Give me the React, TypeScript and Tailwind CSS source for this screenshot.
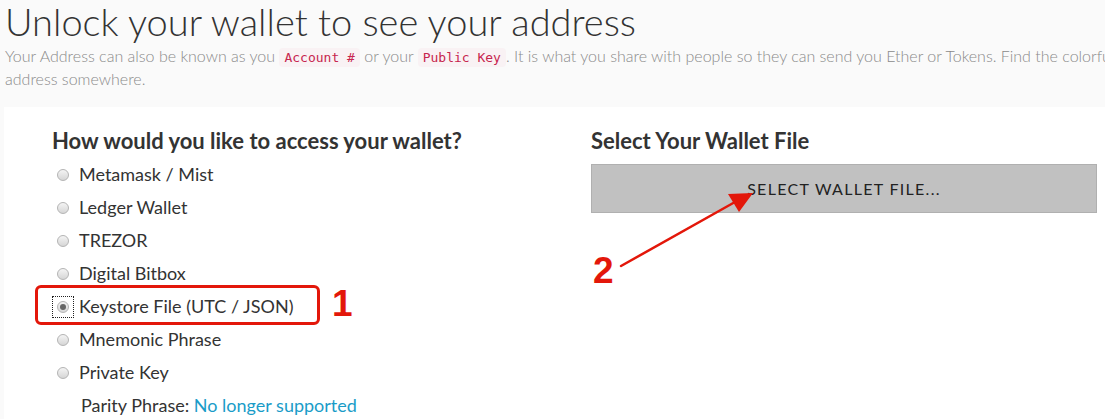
const options = [
  'Metamask / Mist',
  'Ledger Wallet',
  'TREZOR',
  'Digital Bitbox',
  'Keystore File (UTC / JSON)',
  'Mnemonic Phrase',
  'Private Key',
]

function Radio({ checked }: { checked: boolean }) {
  return (
    <span className="w-[12px] h-[12px] rounded-full border border-[#b4b4b4] bg-gradient-to-b from-[#f4f4f4] to-[#d6d6d6] flex items-center justify-center flex-shrink-0">
      {checked && <span className="w-[6px] h-[6px] rounded-full bg-[#666]" />}
    </span>
  )
}

export default function App() {
  const selected = 'Keystore File (UTC / JSON)'

  return (
    <div className="w-[1105px] h-[419px] overflow-hidden bg-[#fafafa] text-[#333] font-['Lato','Noto_Sans',sans-serif] relative">
      {/* Header */}
      <div className="pl-[5px]">
        <h1 className="text-[38px] leading-[42px] font-light text-[#333] whitespace-nowrap">
          Unlock your wallet to see your address
        </h1>
        <p className="mt-[3px] text-[16px] leading-[21px] font-light text-[#8a8a8a] whitespace-nowrap">
          Your Address can also be known as you{' '}
          <code className="px-[5px] py-[2px] rounded bg-[#f9f2f4] text-[#c7254e] text-[13px] font-['DejaVu_Sans_Mono',monospace]">
            Account #
          </code>{' '}
          or your{' '}
          <code className="px-[5px] py-[2px] rounded bg-[#f9f2f4] text-[#c7254e] text-[13px] font-['DejaVu_Sans_Mono',monospace]">
            Public Key
          </code>
          . It is what you share with people so they can send you Ether or Tokens. Find the colorful address icon. Make sure it matches your paper wallet &amp; whenever you enter your
          <br />
          address somewhere.
        </p>
      </div>

      {/* Panel */}
      <div className="ml-[4px] mt-[18px] w-[1200px] h-[320px] bg-white flex">
        {/* Left column */}
        <div className="w-[587px] pl-[48px] pt-[20px]">
          <h3 className="text-[22px] leading-[28px] font-bold text-[#333] whitespace-nowrap">
            How would you like to access your wallet?
          </h3>
          <div className="mt-[3px] flex flex-col">
            {options.map((opt) => {
              const isChecked = opt === selected
              return (
                <label key={opt} className="h-[33px] flex items-center text-[18px] text-[#333]">
                  <span
                    className={`ml-[1px] w-[20px] h-[20px] flex items-center justify-center ${
                      isChecked ? 'outline outline-1 outline-dotted outline-[#222]' : ''
                    }`}
                  >
                    <Radio checked={isChecked} />
                  </span>
                  <span className="ml-[6px]">{opt}</span>
                </label>
              )
            })}
            <p className="h-[33px] flex items-center pl-[29px] text-[18px] text-[#333]">
              Parity Phrase:&nbsp;<a className="text-[#1a9cc8]">No longer supported</a>
            </p>
          </div>
        </div>

        {/* Right column */}
        <div className="w-[506px] pt-[20px]">
          <h3 className="text-[22px] leading-[28px] font-bold text-[#333]">Select Your Wallet File</h3>
          <button className="mt-[9px] w-[506px] h-[49px] bg-[#c1c1c1] border border-[#b0b0b0] text-[16px] tracking-[1.3px] text-[#222] uppercase">
            Select Wallet File...
          </button>
        </div>
      </div>

      {/* Annotations */}
      <div className="absolute left-[35px] top-[285px] w-[285px] h-[40px] border-[3px] border-[#e3170a] rounded-[6px]" />
      <span className="absolute left-[332px] top-[286px] text-[37px] leading-[36px] font-bold text-[#e3170a] font-['Liberation_Sans',sans-serif]">
        1
      </span>
      <span className="absolute left-[593px] top-[253px] text-[37px] leading-[36px] font-bold text-[#e3170a] font-['Liberation_Sans',sans-serif]">
        2
      </span>
      <svg className="absolute left-0 top-0" width="1105" height="419">
        <line x1="621" y1="266" x2="735" y2="202" stroke="#e3170a" strokeWidth="2.5" strokeLinecap="round" />
        <polygon points="753,193 728,194 739,212" fill="#e3170a" />
      </svg>
    </div>
  )
}
